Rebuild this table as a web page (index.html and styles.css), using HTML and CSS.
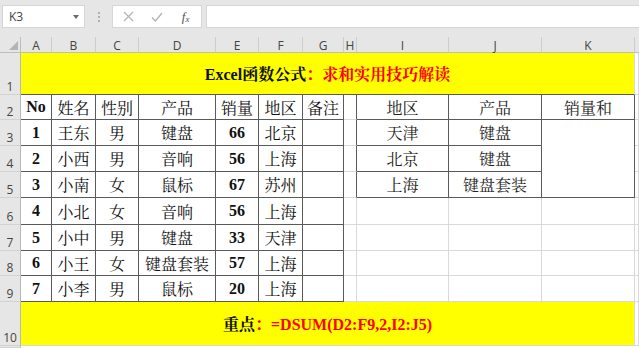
FILE: index.html
```html
<!DOCTYPE html>
<html lang="zh-CN">
<head>
<meta charset="utf-8">
<title>Excel DSUM</title>
<link rel="stylesheet" href="styles.css">
</head>
<body>
<div class="toolbar">
  <div class="namebox"><span class="ref">K3</span><span class="arrow"></span></div>
  <div class="sep"><span></span><span></span><span></span></div>
  <div class="fbox">
    <span class="ico"><svg width="11" height="11" viewBox="0 0 11 11"><path d="M1 1L10 10M10 1L1 10" stroke="#b3b3b3" stroke-width="1.2" fill="none"/></svg></span>
    <span class="ico"><svg width="12" height="10" viewBox="0 0 12 10"><path d="M1 5.5L4.5 9L11 1" stroke="#b3b3b3" stroke-width="1.3" fill="none"/></svg></span>
    <span class="ico fx"><i>f</i><span class="x">x</span></span>
  </div>
  <div class="finput"></div>
</div>
<div class="sheet">
  <div class="corner"><span class="tri"></span></div>
  <div class="ch">A</div><div class="ch">B</div><div class="ch">C</div><div class="ch">D</div><div class="ch">E</div><div class="ch">F</div><div class="ch">G</div><div class="ch">H</div><div class="ch">I</div><div class="ch">J</div><div class="ch">K</div><div class="ch end"></div>

  <div class="rh">1</div>
  <div class="c band top"><span class="blk">Excel函数公式</span><span class="red">：求和实用技巧解读</span></div>
  <div class="c"></div>

  <div class="rh">2</div>
  <div class="c d b">No</div><div class="c d">姓名</div><div class="c d">性别</div><div class="c d">产品</div><div class="c d">销量</div><div class="c d">地区</div><div class="c d">备注</div>
  <div class="c hr"></div>
  <div class="c d r">地区</div><div class="c d r">产品</div><div class="c d r">销量和</div>
  <div class="c"></div>

  <div class="rh">3</div>
  <div class="c d b">1</div><div class="c d">王东</div><div class="c d">男</div><div class="c d">键盘</div><div class="c d b">66</div><div class="c d">北京</div><div class="c d"></div>
  <div class="c hr"></div>
  <div class="c d r">天津</div><div class="c d r">键盘</div><div class="c d merged"></div>
  <div class="c"></div>

  <div class="rh">4</div>
  <div class="c d b">2</div><div class="c d">小西</div><div class="c d">男</div><div class="c d">音响</div><div class="c d b">56</div><div class="c d">上海</div><div class="c d"></div>
  <div class="c hr"></div>
  <div class="c d r">北京</div><div class="c d r">键盘</div>
  <div class="c"></div>

  <div class="rh">5</div>
  <div class="c d b">3</div><div class="c d">小南</div><div class="c d">女</div><div class="c d">鼠标</div><div class="c d b">67</div><div class="c d">苏州</div><div class="c d"></div>
  <div class="c hr"></div>
  <div class="c d r">上海</div><div class="c d r">键盘套装</div>
  <div class="c"></div>

  <div class="rh">6</div>
  <div class="c d b">4</div><div class="c d">小北</div><div class="c d">女</div><div class="c d">音响</div><div class="c d b">56</div><div class="c d">上海</div><div class="c d"></div>
  <div class="c"></div><div class="c"></div><div class="c"></div><div class="c"></div><div class="c"></div>

  <div class="rh">7</div>
  <div class="c d b">5</div><div class="c d">小中</div><div class="c d">男</div><div class="c d">键盘</div><div class="c d b">33</div><div class="c d">天津</div><div class="c d"></div>
  <div class="c"></div><div class="c"></div><div class="c"></div><div class="c"></div><div class="c"></div>

  <div class="rh">8</div>
  <div class="c d b">6</div><div class="c d">小王</div><div class="c d">女</div><div class="c d">键盘套装</div><div class="c d b">57</div><div class="c d">上海</div><div class="c d"></div>
  <div class="c"></div><div class="c"></div><div class="c"></div><div class="c"></div><div class="c"></div>

  <div class="rh">9</div>
  <div class="c d b">7</div><div class="c d">小李</div><div class="c d">男</div><div class="c d">鼠标</div><div class="c d b">20</div><div class="c d">上海</div><div class="c d"></div>
  <div class="c"></div><div class="c"></div><div class="c"></div><div class="c"></div><div class="c"></div>

  <div class="rh">10</div>
  <div class="c band"><span class="blk">重点</span><span class="red">：=DSUM(D2:F9,2,I2:J5)</span></div>
  <div class="c"></div>

  <div class="rh"></div>
</div>
</body>
</html>
```
FILE: styles.css
```css
html, body {
  margin: 0;
  padding: 0;
  background: #ffffff;
  overflow: hidden;
}
body {
  width: 639px;
  height: 348px;
  font-family: "Liberation Serif", "Noto Serif CJK SC", "Noto Sans CJK SC", serif;
}
.toolbar {
  height: 37px;
  box-sizing: border-box;
  padding-top: 5px;
  background: #e6e6e6;
  display: flex;
  align-items: flex-start;
}
.namebox {
  margin-left: 2px;
  width: 83px;
  height: 23px;
  box-sizing: border-box;
  background: #ffffff;
  border: 1px solid #d6d6d6;
  display: flex;
  align-items: center;
  justify-content: space-between;
  padding: 0 5px 0 6px;
}
.ref {
  font-family: "Open Sans", "Liberation Sans", sans-serif;
  font-size: 12px;
  color: #444;
}
.arrow {
  width: 0;
  height: 0;
  border-left: 3.5px solid transparent;
  border-right: 3.5px solid transparent;
  border-top: 4px solid #6a6a6a;
}
.sep {
  width: 27px;
  height: 23px;
  display: flex;
  flex-direction: column;
  align-items: center;
  justify-content: center;
  gap: 2px;
}
.sep span {
  width: 2px;
  height: 2px;
  background: #b0b0b0;
}
.fbox {
  width: 90px;
  height: 23px;
  box-sizing: border-box;
  background: #ffffff;
  border: 1px solid #d6d6d6;
  display: flex;
  align-items: center;
  justify-content: space-around;
  padding: 0 1px;
}
.ico {
  width: 28px;
  display: flex;
  align-items: center;
  justify-content: center;
}
.fx {
  font-family: "Liberation Serif", serif;
  font-size: 13px;
  color: #555;
}
.fx .x {
  font-style: italic;
  font-size: 9px;
  position: relative;
  top: 2px;
}
.finput {
  flex: 1;
  margin-left: 4px;
  height: 23px;
  box-sizing: border-box;
  background: #ffffff;
  border: 1px solid #d6d6d6;
  border-right: none;
}
.sheet {
  display: grid;
  grid-template-columns: 21px 31px 44px 43px 77px 43px 44px 41px 13px 92px 93px 93px 4px;
  grid-template-rows: 16px 42px 25px 26px 26px 26px 27px 26px 25px 26px 44px 2px;
}
.corner {
  background: #e6e6e6;
  border-right: 1px solid #bdbdbd;
  border-bottom: 1px solid #bdbdbd;
  box-sizing: border-box;
  display: flex;
  align-items: flex-end;
  justify-content: flex-end;
  padding: 0 2px 2px 0;
}
.tri {
  width: 9px;
  height: 9px;
  background: #b4b4b4;
  clip-path: polygon(100% 0, 100% 100%, 0 100%);
}
.ch {
  background: #e6e6e6;
  border-right: 1px solid #cdcdcd;
  border-bottom: 1px solid #bdbdbd;
  box-sizing: border-box;
  display: flex;
  align-items: center;
  justify-content: center;
  font-family: "Open Sans", "Liberation Sans", sans-serif;
  font-size: 12px;
  color: #444;
  padding-top: 1px;
}
.ch.end {
  border-right: none;
}
.rh {
  background: #e6e6e6;
  border-right: 1px solid #b8b8b8;
  border-bottom: 1px solid #d2d2d2;
  box-sizing: border-box;
  display: flex;
  align-items: flex-end;
  justify-content: center;
  font-family: "Open Sans", "Liberation Sans", sans-serif;
  font-size: 12px;
  line-height: 15px;
  color: #444;
}
.c {
  border-right: 1px solid #d9d9d9;
  border-bottom: 1px solid #d9d9d9;
  box-sizing: border-box;
  display: flex;
  align-items: center;
  justify-content: center;
  font-size: 16px;
  color: #111;
  white-space: nowrap;
}
.c.d {
  border-right-color: #5a5a5a;
  border-bottom-color: #5a5a5a;
}
.c.hr {
  border-right-color: #5a5a5a;
}
.c.b {
  font-weight: bold;
}
.c.r {
  color: #222;
}
.c.merged {
  grid-row: span 3;
}
.c.band {
  grid-column: span 11;
  background: #ffff00;
  font-weight: bold;
  font-size: 16px;
}
.c.band.top {
  border-bottom-color: #5a5a5a;
}
.blk {
  color: #111;
}
.red {
  color: #ff0000;
}
```
